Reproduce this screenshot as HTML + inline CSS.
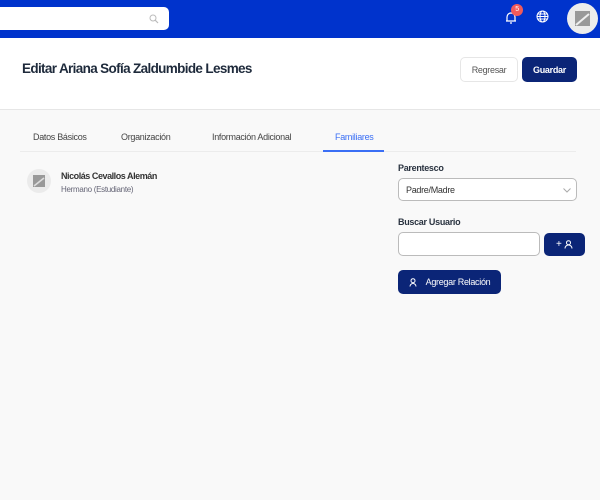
<!DOCTYPE html>
<html><head><meta charset="utf-8"><style>
*{box-sizing:border-box;margin:0;padding:0}
body{width:600px;height:500px;overflow:hidden;background:#f9f9f9;font-family:"Liberation Sans",sans-serif;color:#1e2a3b;position:relative;letter-spacing:-0.3px}
.hdr{position:absolute;left:0;top:0;width:600px;height:38px;background:#0033cc}
.search{position:absolute;left:-6px;top:7px;width:175px;height:23px;background:#fff;border-radius:5px}
.abs{position:absolute}
.top{position:absolute;top:38px;left:0;width:600px;height:72px;background:#fff;border-bottom:1px solid #e6e6e6}
.btn{position:absolute;border-radius:5px;font-size:10px;display:flex;align-items:center;justify-content:center}
.tab{position:absolute;top:132px;font-size:9px;color:#444}
.lbl{position:absolute;left:398px;font-size:9px;font-weight:bold;color:#2a3340}
.inp{position:absolute;background:#fff;border:1px solid #bbb;border-radius:5px}
</style></head><body>
<div class="hdr">
 <div class="search"><svg class="abs" style="left:155px;top:7px" width="10" height="10" viewBox="0 0 10 10"><circle cx="4" cy="4" r="3" fill="none" stroke="#bbb" stroke-width="1"/><path d="M6.2 6.2L9 9" stroke="#bbb" stroke-width="1.2"/></svg></div>
 <svg class="abs" style="left:505px;top:11px" width="12" height="13" viewBox="0 0 12 13"><path d="M2 10V6a4 4 0 0 1 8 0v4zM1 10h10M5 12h2" fill="none" stroke="#fff" stroke-width="1.2"/></svg>
 <div class="abs" style="left:511px;top:4px;width:12px;height:12px;border-radius:6px;background:#f05a5a;color:#fff;font-size:7px;text-align:center;line-height:12px">5</div>
 <svg class="abs" style="left:536px;top:10px" width="13" height="13" viewBox="0 0 13 13"><g fill="none" stroke="#fff" stroke-width="1"><circle cx="6.5" cy="6.5" r="5.5"/><ellipse cx="6.5" cy="6.5" rx="2.5" ry="5.5"/><path d="M1 6.5h11M2 4h9M2 9h9"/></g></svg>
 <div class="abs" style="left:567px;top:3px;width:31px;height:31px;border-radius:50%;background:#ececec"><div class="abs" style="left:8px;top:8px;width:15px;height:15px;background:#999"></div><svg class="abs" style="left:8px;top:8px" width="15" height="15"><path d="M1 14L14 3" stroke="#eee" stroke-width="2"/></svg></div>
</div>
<div class="top">
 <div class="abs" style="left:22px;top:23px;font-size:13.5px;font-weight:bold;color:#1e2a3b;letter-spacing:-0.65px">Editar Ariana Sofía Zaldumbide Lesmes</div>
 <div class="btn" style="left:460px;top:19px;width:58px;height:25px;border:1px solid #e6e6e6;background:#fff;color:#555;font-size:9px">Regresar</div>
 <div class="btn" style="left:522px;top:19px;width:55px;height:25px;background:#0b2577;color:#fff;font-size:9px;font-weight:bold">Guardar</div>
</div>
<div class="tab" style="left:33px">Datos Básicos</div>
<div class="tab" style="left:121px">Organización</div>
<div class="tab" style="left:212px">Información Adicional</div>
<div class="tab" style="left:335px;color:#3b6ff5">Familiares</div>
<div class="abs" style="left:20px;top:151px;width:556px;height:1px;background:#ececec"></div>
<div class="abs" style="left:323px;top:150px;width:61px;height:2px;background:#3b6ff5"></div>
<div class="abs" style="left:27px;top:169px;width:24px;height:24px;border-radius:50%;background:#ebebeb"><div class="abs" style="left:6px;top:6px;width:12px;height:12px;background:#999"></div><svg class="abs" style="left:6px;top:6px" width="12" height="12"><path d="M1 11L11 3" stroke="#ddd" stroke-width="1.6"/></svg></div>
<div class="abs" style="left:61px;top:171px;font-size:9px;font-weight:bold;color:#333;letter-spacing:-0.45px">Nicolás Cevallos Alemán</div>
<div class="abs" style="left:61px;top:185px;font-size:8px;color:#667">Hermano (Estudiante)</div>
<div class="lbl" style="top:163px">Parentesco</div>
<div class="inp" style="left:398px;top:178px;width:179px;height:23px"><span class="abs" style="left:7px;top:6px;font-size:9px;color:#333">Padre/Madre</span><svg class="abs" style="left:164px;top:9px" width="8" height="5"><path d="M0.5 0.5L4 4L7.5 0.5" fill="none" stroke="#aaa"/></svg></div>
<div class="lbl" style="top:217px">Buscar Usuario</div>
<div class="inp" style="left:398px;top:232px;width:142px;height:24px"></div>
<div class="btn" style="left:544px;top:233px;width:41px;height:23px;background:#0b2577;color:#fff;font-size:10px">+&nbsp;<svg width="9" height="9" viewBox="0 0 9 9"><circle cx="4.5" cy="2.7" r="2" fill="none" stroke="#fff"/><path d="M1 8.5a3.5 3.5 0 0 1 7 0" fill="none" stroke="#fff"/></svg></div>
<div class="btn" style="left:398px;top:270px;width:103px;height:24px;background:#0b2577;color:#fff;font-size:9px"><svg width="9" height="9" viewBox="0 0 9 9" style="margin-right:8px"><circle cx="4" cy="2.7" r="2" fill="none" stroke="#fff"/><path d="M1 8.5a3 3 0 0 1 6 0" fill="none" stroke="#fff"/></svg>Agregar Relación</div>
</body></html>
